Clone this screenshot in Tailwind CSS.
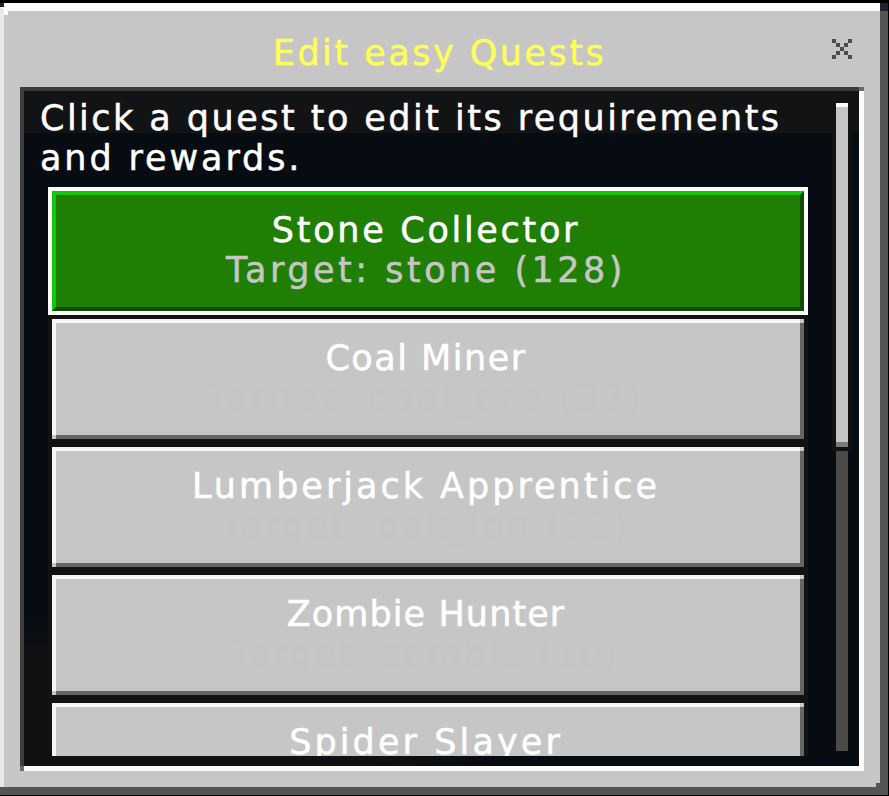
<!doctype html>
<html lang="en">
  <head>
    <meta charset="UTF-8" />
    <title>Edit easy Quests</title>
    <script src="https://cdn.jsdelivr.net/npm/@tailwindcss/browser@4"></script>
  </head>

  <body class="bg-black w-[889px] h-[796px] overflow-hidden font-['DejaVu_Sans',sans-serif] text-[35px] leading-[40px] text-white [-webkit-text-stroke:0.5px]">
    <!-- WINDOW -->
    <div class="relative mt-[3px] w-[888px] h-[792px] bg-[#c6c6c6] border-t-8 border-l-4 border-r-8 border-b-8 border-t-white border-l-[#e8e8e8] border-r-[#555555] border-b-[#555555]">
      <span class="absolute -top-2 -left-1 w-1 h-1 bg-[#1c2430]"></span>
      <span class="absolute top-0 left-0 w-1 h-1 bg-white"></span>
      <span class="absolute -top-2 -right-2 w-2 h-2 bg-[#1c2430]"></span>
      <span class="absolute -bottom-2 -left-1 w-1 h-2 bg-[#555555]"></span>
      <span class="absolute bottom-0 right-0 w-1 h-1 bg-[#555555]"></span>

      <!-- TITLE -->
      <div class="relative h-[76px] pt-[22px] pr-[5px] text-center text-[#ffff55] tracking-[2.5px]">
        Edit easy Quests
        <svg class="absolute left-[828px] top-7 w-5 h-5" viewBox="0 0 5 5" shape-rendering="crispEdges" fill="#4b4b4b">
          <path d="M0 0h1v1H0zM4 0h1v1H4zM1 1h1v1H1zM3 1h1v1H3zM2 2h1v1H2zM1 3h1v1H1zM3 3h1v1H3zM0 4h1v1H0zM4 4h1v1H4z" />
        </svg>
      </div>

      <!-- PANEL -->
      <div class="relative ml-4 w-[844px] h-[684px] flex border-t-4 border-l-4 border-r-[5px] border-b-[5px] border-t-[#3c3c3c] border-l-[#3c3c3c] border-r-white border-b-white bg-[#070c12] bg-[linear-gradient(#121315_42px,transparent_42px),radial-gradient(ellipse_480px_150px_at_0%_100%,#111113_70%,transparent)]">
        <span class="absolute -top-1 -right-[5px] w-[5px] h-1 bg-[#6b6b6b]"></span>
        <span class="absolute -bottom-[5px] -left-1 w-1 h-[5px] bg-[#6b6b6b]"></span>

        <!-- CONTENT -->
        <div class="w-[784px] shrink-0">
          <p class="pt-[7px] pl-4 whitespace-nowrap tracking-[2.47px]">Click a quest to edit its requirements<br /><span class="tracking-[2.9px]">and rewards.</span></p>

          <div class="ml-6 mt-[9px] w-[760px] h-[569px] overflow-hidden bg-[#121212] flex flex-col gap-2 p-1 pb-0">
            <!-- selected quest -->
            <div class="relative shrink-0 h-[120px] pt-[15px] pr-1 text-center bg-[#1f7f04] border-4 border-t-[#16c60c] border-l-[#16c60c] border-r-[#0d4f00] border-b-[#0d4f00] outline-4 outline-white">
              <div class="tracking-[2.7px]">Stone Collector</div>
              <div class="text-[#c6c6c6] tracking-[3.5px]">Target: stone (128)</div>
            </div>

            <div class="relative shrink-0 h-[120px] pt-[15px] pr-1 text-center bg-[#c6c6c6] border-4 border-t-[#f6f6f6] border-l-[#f6f6f6] border-r-[#656565] border-b-[#656565]">
              <span class="absolute -top-1 -right-1 w-1 h-1 bg-[#c6c6c6]"></span>
              <span class="absolute -bottom-1 -left-1 w-1 h-1 bg-[#c6c6c6]"></span>
              <div class="tracking-[1.5px]">Coal Miner</div>
              <div class="text-[#c5c5c5] tracking-[3.7px]">Target: coal_ore (32)</div>
            </div>

            <div class="relative shrink-0 h-[120px] pt-[15px] pr-1 text-center bg-[#c6c6c6] border-4 border-t-[#f6f6f6] border-l-[#f6f6f6] border-r-[#656565] border-b-[#656565]">
              <span class="absolute -top-1 -right-1 w-1 h-1 bg-[#c6c6c6]"></span>
              <span class="absolute -bottom-1 -left-1 w-1 h-1 bg-[#c6c6c6]"></span>
              <div class="tracking-[3px]">Lumberjack Apprentice</div>
              <div class="text-[#c5c5c5] tracking-[3.05px]">Target: oak_log (32)</div>
            </div>

            <div class="relative shrink-0 h-[120px] pt-[15px] pr-1 text-center bg-[#c6c6c6] border-4 border-t-[#f6f6f6] border-l-[#f6f6f6] border-r-[#656565] border-b-[#656565]">
              <span class="absolute -top-1 -right-1 w-1 h-1 bg-[#c6c6c6]"></span>
              <span class="absolute -bottom-1 -left-1 w-1 h-1 bg-[#c6c6c6]"></span>
              <div class="tracking-[1.1px]">Zombie Hunter</div>
              <div class="text-[#c5c5c5] tracking-[2.5px]">Target: zombie (10)</div>
            </div>

            <div class="relative shrink-0 h-[120px] pt-[15px] pr-1 text-center bg-[#c6c6c6] border-4 border-t-[#f6f6f6] border-l-[#f6f6f6] border-r-[#656565] border-b-[#656565]">
              <span class="absolute -top-1 -right-1 w-1 h-1 bg-[#c6c6c6]"></span>
              <span class="absolute -bottom-1 -left-1 w-1 h-1 bg-[#c6c6c6]"></span>
              <div class="tracking-[3.1px]">Spider Slayer</div>
            </div>
          </div>
        </div>

        <!-- SCROLLBAR -->
        <div class="ml-6 mt-2 w-5 shrink-0">
          <div class="h-[352px] bg-[#14120f] px-1 pt-1 pb-1">
            <div class="h-[344px] bg-[#c6c6c6] border-t-4 border-b-[5px] border-t-white border-b-[#7a7a7a]"></div>
          </div>
          <div class="mx-1 h-[300px] bg-[#4a4a4a]"></div>
        </div>
      </div>
    </div>
  </body>
</html>
